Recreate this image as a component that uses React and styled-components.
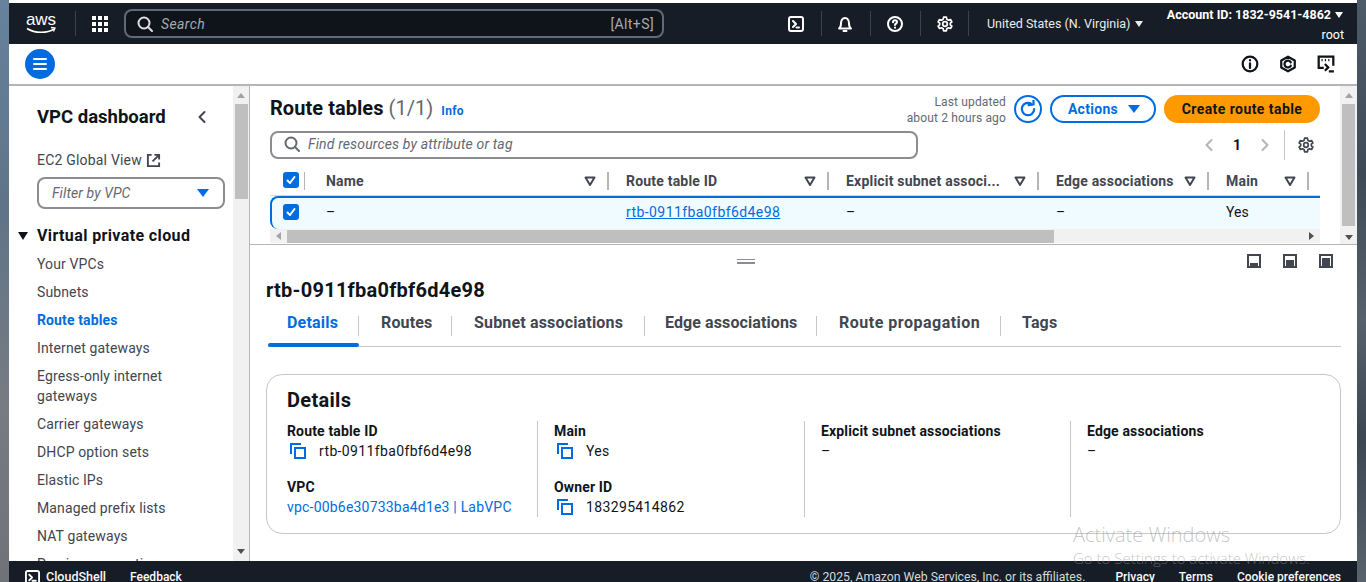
import React from 'react';
import styled, { createGlobalStyle } from 'styled-components';

const Global = createGlobalStyle`
  html, body { margin: 0; padding: 0; width: 1366px; height: 582px; overflow: hidden; background: #fff; }
  * { box-sizing: border-box; }
  body { font-family: Roboto, "Noto Sans", sans-serif; font-size: 14px; color: #0f141a; }
`;

const Desktop = styled.div`
  width: 1366px; height: 582px; display: flex; position: relative; overflow: hidden;
`;
const Gutter = styled.div`
  width: ${p => p.$w}px; flex: none;
  background: ${p => p.$right
    ? 'linear-gradient(180deg,#4d5a68 0%,#3f4a57 30%,#56616d 55%,#3c4652 75%,#59636e 100%)'
    : 'linear-gradient(180deg,#66829c 0%,#5f7488 35%,#777b82 70%,#6f7378 100%)'};
`;
const Window = styled.div`
  flex: 1; min-width: 0; display: flex; flex-direction: column; background: #fff; padding-top: 3px;
`;

/* ---- top nav ---- */
const TopNav = styled.header`
  height: 41px; flex: none; background: #161d26; color: #fff; display: flex; align-items: center; position: relative;
`;
const Logo = styled.div`
  width: 66px; padding-left: 16px; flex: none; display: flex; align-items: center;
`;
const NavSep = styled.span`
  width: 1px; height: 25px; background: #3a434f; flex: none; margin: ${p => p.$m || '0'};
`;
const SearchBox = styled.div`
  width: 540px; height: 29px; flex: none; background: #0f141a; border: 2px solid #5f6b7a; border-radius: 8px;
  display: flex; align-items: center; padding: 0 8px 0 11px; color: #a4abb3; font-size: 14px; letter-spacing: .4px;
`;
const SearchHint = styled.span`
  font-style: italic; margin-left: 8px; flex: 1;
`;
const NavIcons = styled.div`
  display: flex; align-items: center; margin-left: 118px; flex: none;
`;
const NavIcon = styled.span`
  width: ${p => p.$w}px; display: flex; justify-content: center; flex: none;
`;
const Region = styled.span`
  font-size: 12.5px; margin-left: 18px; white-space: nowrap; width: 159px; display: flex; align-items: center; flex: none; color: #e9ebed;
`;
const Caret = styled.span`
  width: 0; height: 0; border-left: 4px solid transparent; border-right: 4px solid transparent; border-top: 6px solid ${p => p.$c || '#e9ebed'};
  display: inline-block; margin-left: ${p => p.$m || 5}px; flex: none;
`;
const Account = styled.div`
  width: 185px; flex: none; margin-left: 13px; display: flex; flex-direction: column; align-items: flex-end; margin-top: 3px; font-size: 12.5px; line-height: 20px; white-space: nowrap;
`;
const AccountId = styled.span`
  font-weight: 700; display: flex; align-items: center; margin-right: 1px;
`;

/* ---- utility bar ---- */
const UtilBar = styled.div`
  height: 42px; flex: none; border-bottom: 2px solid #b4b4bb; display: flex; align-items: center; padding: 0 22px 0 16px;
  justify-content: space-between;
`;
const MenuBall = styled.span`
  width: 30px; height: 30px; border-radius: 50%; background: #006ce0; display: flex; align-items: center; justify-content: center;
`;
const UtilIcons = styled.div`
  display: flex; gap: 20px; align-items: center;
`;

/* ---- body ---- */
const Body = styled.div`
  flex: 1; min-height: 0; display: flex;
`;
const Side = styled.aside`
  width: 224px; flex: none; overflow: hidden; padding: 0 8px 0 28px; position: relative;
`;
const SideHead = styled.div`
  display: flex; align-items: center; justify-content: space-between; height: 30px; margin-top: 16px; padding-right: 16px;
`;
const SideTitle = styled.div`
  font-size: 18.5px; font-weight: 700; color: #0f141a;
`;
const GlobalLink = styled.div`
  display: flex; align-items: center; gap: 4px; margin-top: 18px; color: #424650; height: 20px; font-size: 14px; letter-spacing: .2px;
`;
const Filter = styled.div`
  width: 188px; height: 32px; border: 2px solid #8c8c94; border-radius: 8px; margin-top: 7px; display: flex; align-items: center; justify-content: space-between;
  padding: 0 14px 0 13px; font-style: italic; color: #656871; letter-spacing: .1px;
`;
const BlueTri = styled.span`
  width: 0; height: 0; border-left: 6px solid transparent; border-right: 6px solid transparent; border-top: 8px solid #006ce0;
`;
const SideSection = styled.div`
  font-size: 16px; font-weight: 700; margin-top: 17px; height: 20px; line-height: 20px; position: relative; white-space: nowrap; letter-spacing: .38px;
`;
const SectionTri = styled.span`
  position: absolute; left: -19px; top: 6px; width: 0; height: 0; border-left: 5.5px solid transparent; border-right: 5.5px solid transparent; border-top: 8px solid #0f141a;
`;
const NavList = styled.ul`
  list-style: none; margin: 8px 0 0; padding: 0;
`;
const NavItem = styled.li`
  line-height: 20px; margin-bottom: 8px; color: ${p => p.$on ? '#006ce0' : '#424650'}; font-weight: ${p => p.$on ? 700 : 400}; font-size: 14px; letter-spacing: .12px; padding-right: 4px;
`;
const VScroll = styled.div`
  width: 17px; flex: none; background: #f1f1f1; position: relative; display: flex; flex-direction: column; align-items: center;
  border-right: ${p => p.$line ? '1px solid #b4b4bb' : '0'};
`;
const ScrollThumb = styled.div`
  width: 13px; height: ${p => p.$h}px; background: #bfbfbf; margin-top: 6px; flex: none;
`;
const ArrowUp = styled.span`
  width: 0; height: 0; border-left: 4px solid transparent; border-right: 4px solid transparent; border-bottom: 5px solid #a3a3a3; margin-top: 7px; flex: none;
`;
const ArrowDown = styled.span`
  width: 0; height: 0; border-left: 4px solid transparent; border-right: 4px solid transparent; border-top: 5px solid #505050; margin-top: auto; margin-bottom: ${p => p.$b}px; flex: none;
`;
const MainCol = styled.main`
  flex: 1; min-width: 0; display: flex; flex-direction: column;
`;
const TopPane = styled.section`
  height: 159px; flex: none; display: flex; border-bottom: 1px solid #b4b4bb;
`;
const TopInner = styled.div`
  flex: 1; min-width: 0; padding: 0 20px; display: flex; flex-direction: column;
`;
const TitleRow = styled.div`
  height: 46px; flex: none; display: flex; align-items: center;
`;
const H1 = styled.h1`
  margin: -2px 0 0; font-size: 20px; font-weight: 700; color: #0f141a; line-height: 24px; white-space: nowrap; letter-spacing: .05px;
`;
const Count = styled.span`
  font-weight: 400; color: #656871;
`;
const Info = styled.span`
  font-size: 12px; font-weight: 700; color: #006ce0; margin-left: 8px; margin-top: 4px; letter-spacing: .3px;
`;
const Updated = styled.div`
  margin-left: auto; margin-top: 1px; font-size: 12px; line-height: 16px; color: #656871; text-align: right; white-space: nowrap; letter-spacing: .15px;
`;
const Refresh = styled.span`
  width: 28px; height: 28px; margin-left: 8px; border: 2px solid #006ce0; border-radius: 50%; display: flex; align-items: center; justify-content: center; flex: none;
`;
const Actions = styled.span`
  width: 106px; height: 28px; margin-left: 8px; border: 2px solid #006ce0; border-radius: 14px; color: #006ce0; font-weight: 700; display: flex; align-items: center; justify-content: center; gap: 10px; flex: none; letter-spacing: .3px; padding: 0 0 1px 2px;
`;
const Create = styled.span`
  width: 156px; height: 28px; margin-left: 8px; background: #ff9900; border-radius: 14px; color: #0f141a; font-weight: 700; display: flex; align-items: center; justify-content: center; flex: none; letter-spacing: .44px; padding-bottom: 1px;
`;
const FilterRow = styled.div`
  height: 28px; margin-top: -1px; flex: none; display: flex; align-items: center;
`;
const FindBox = styled.div`
  width: 648px; height: 28px; border: 2px solid #8c8c94; border-radius: 8px; display: flex; align-items: center; padding: 0 0 2px 12px; color: #656871; font-style: italic; gap: 8px; letter-spacing: .15px;
`;
const Pager = styled.div`
  margin-left: auto; display: flex; align-items: center; height: 28px;
`;
const PageNum = styled.span`
  font-weight: 700; width: 42px; text-align: center; color: #0f141a;
`;
const PagerSep = styled.span`
  width: 1px; height: 30px; background: #c6c6cd; margin: 0 13px 0 12px;
`;
const PagerEnd = styled.span`
  width: 6px; flex: none;
`;
const GridRow = styled.div`
  display: grid; grid-template-columns: 35px 304px 220px 210px 170px 100px 1fr; flex: none; height: ${p => p.$h}px;
`;
const HeadCell = styled.div`
  display: flex; align-items: center; justify-content: space-between; padding: 0 13px 2px ${p => p.$first ? 21 : 17}px; position: relative; font-weight: 700; color: #424650; white-space: nowrap; letter-spacing: .2px;
  &::after { content: ''; position: absolute; right: 0; top: 3px; bottom: 5px; width: 2px; background: #b4b4bb; }
`;
const CheckHead = styled.div`
  display: flex; align-items: center; padding: 0 0 4px 13px; position: relative;
  &::after { content: ''; position: absolute; right: 0; top: 3px; bottom: 5px; width: 1px; background: #b4b4bb; }
`;
const HeadWrap = styled.div`
  margin-top: 10px; border-bottom: 1px solid #d5d5da;
`;
const SelRow = styled.div`
  height: 33px; background: #f0fbff; border-top: 2px solid #006ce0; border-left: 2px solid #006ce0; border-radius: 8px 0 0 8px; flex: none; padding-bottom: 4px;
  display: grid; grid-template-columns: 33px 304px 220px 210px 170px 100px 1fr; align-items: center;
`;
const Cell = styled.div`
  padding-left: ${p => p.$first ? 21 : 17}px; white-space: nowrap; color: #0f141a;
`;
const CheckCell = styled.div`
  padding-left: 11px; display: flex; align-items: center;
`;
const Link = styled.a`
  color: #006ce0; text-decoration: underline; letter-spacing: .42px;
`;
const Box = styled.span`
  width: 16px; height: 16px; border-radius: 3px; background: #006ce0; display: flex; align-items: center; justify-content: center; flex: none;
`;
const HScroll = styled.div`
  height: 14px; background: #f1f1f1; flex: none; display: flex; align-items: center; position: relative;
`;
const HThumb = styled.div`
  margin-left: 17px; width: 767px; height: 13px; background: #bfbfbf;
`;
const HArrow = styled.span`
  position: absolute; top: 3px; width: 0; height: 0; border-top: 4px solid transparent; border-bottom: 4px solid transparent;
  ${p => p.$r ? 'right: 6px; border-left: 5px solid #505050;' : 'left: 6px; border-right: 5px solid #a3a3a3;'}
`;

/* ---- bottom pane ---- */
const BottomPane = styled.section`
  flex: 1; min-height: 0; padding: 0 16px; display: flex; flex-direction: column; position: relative;
`;
const PaneTools = styled.div`
  height: 32px; flex: none; display: flex; align-items: center; justify-content: flex-end; gap: 22px; padding-right: 8px; position: relative;
`;
const Grip = styled.span`
  position: absolute; left: 471px; top: 14px; width: 18px; height: 5px; border-top: 1px solid #8c8c94; border-bottom: 2px solid #8c8c94;
`;
const ResTitle = styled.h2`
  margin: 0; font-size: 20px; font-weight: 700; line-height: 26px; height: 26px; color: #0f141a; letter-spacing: .25px;
`;
const Tabs = styled.div`
  margin: 6px 0 0 2px; display: flex; height: 38px; border-bottom: 1px solid #c6c6cd; flex: none;
`;
const Tab = styled.div`
  padding: 0 0 11px ${p => p.$pad}px; width: ${p => p.$w}px; flex: none; height: 37px; display: flex; align-items: center; position: relative;
  font-size: 16px; font-weight: 700; white-space: nowrap; letter-spacing: ${p => p.$ls}px;
  color: ${p => p.$on ? '#006ce0' : '#424650'};
  &::before { content: ''; position: absolute; right: 0; top: 7px; height: 20px; width: 1px; background: ${p => p.$last ? 'transparent' : '#c6c6cd'}; }
  ${p => p.$on ? `&::after { content: ''; position: absolute; left: 0; right: 0; bottom: -1px; height: 4px; background: #006ce0; border-radius: 2px; }` : ''}
`;
const Card = styled.div`
  margin-top: 27px; height: 160px; border: 1px solid #c6c6cd; border-radius: 16px; padding: 13px 20px 0; flex: none;
`;
const CardTitle = styled.h3`
  margin: 0; font-size: 20px; font-weight: 700; line-height: 24px; color: #0f141a; letter-spacing: .3px;
`;
const CardGrid = styled.div`
  margin-top: 9px; display: grid; grid-template-columns: 250px 267px 266px 1fr;
`;
const CardCol = styled.div`
  height: 96px; padding-left: ${p => p.$first ? 0 : 16}px; border-left: ${p => p.$first ? 0 : '1px solid #c6c6cd'};
`;
const Field = styled.div`
  height: 56px;
`;
const Label = styled.div`
  font-weight: 700; line-height: 20px; color: #0f141a; letter-spacing: .15px;
`;
const Value = styled.div`
  display: flex; align-items: center; line-height: 20px; color: #0f141a; letter-spacing: .36px;
`;
const CopyWrap = styled.span`
  width: 32px; padding-left: 3px; display: flex; align-items: center; flex: none;
`;
const VpcLink = styled.a`
  color: #006ce0; line-height: 20px; letter-spacing: .2px;
`;

/* ---- footer ---- */
const Footer = styled.footer`
  height: 21px; flex: none; background: #161d26; color: #f9f9fa; display: flex; align-items: flex-start; padding: 8px 16px 0; font-size: 12px; overflow: hidden; line-height: 16px; white-space: nowrap;
`;
const FootLeft = styled.div`
  display: flex; align-items: center; font-weight: 500;
`;
const FootRight = styled.div`
  margin-left: auto; display: flex;
`;
const Copyright = styled.span`
  color: #d5d8dc; font-size: 12.25px;
`;
const FootLink = styled.span`
  font-weight: 500; margin-left: ${p => p.$m}px; font-size: ${p => p.$fs || 12}px;
`;
const Watermark = styled.div`
  position: absolute; left: 1073px; top: 523px; color: rgba(150,150,150,.55); pointer-events: none; font-family: "Open Sans", sans-serif; font-weight: 300; white-space: nowrap;
`;
const WmBig = styled.div`
  font-size: 20px; line-height: 24px;
`;
const WmSmall = styled.div`
  font-size: 15px; line-height: 20px; margin-top: 1px;
`;

const Svg = ({ s = 16, c = '#fff', w = 2, vb = '0 0 16 16', children, ...r }) => (
  <svg width={s} height={s} viewBox={vb} fill="none" stroke={c} strokeWidth={w} strokeLinecap="round" strokeLinejoin="round" {...r}>{children}</svg>
);
const SearchIco = ({ c }) => <Svg c={c}><circle cx="7" cy="7" r="5.5" /><path d="M11 11l4 4" /></Svg>;
const Check = () => <Svg s={12} w={2} vb="0 0 12 12"><path d="M2.5 6.5l2.5 2.5 4.5-6" /></Svg>;
const FilterTri = () => <Svg s={12} c="#424650" w={2} vb="0 0 12 12"><path d="M1.5 2.5h9L6 10z" /></Svg>;
const Gear = ({ c = '#fff', s = 16 }) => (
  <Svg c={c} s={s} w={1.7}>
    <circle cx="8" cy="8" r="2.3" />
    <path d="M6.600 1.200h2.800l.4 2 1.700 1 2-.7 1.400 2.400-1.600 1.300v1.600l1.600 1.300-1.400 2.400-2-.7-1.700 1-.4 2H6.600l-.4-2-1.700-1-2 .7L1.100 10.100l1.600-1.300V7.200L1.100 5.900l1.400-2.400 2 .7 1.700-1z" />
  </Svg>
);
const Copy = () => (
  <Svg s={16} c="#006ce0" w={2} vb="0 0 16 16" strokeLinecap="butt" strokeLinejoin="miter">
    <rect x="5" y="5" width="10" height="10" />
    <path d="M11 1H1v10" />
  </Svg>
);
const Pane = ({ h }) => (
  <svg width="14" height="14" viewBox="0 0 14 14">
    <rect x="1" y="1" width="12" height="12" fill="none" stroke="#424650" strokeWidth="2" />
    <rect x="3" y={13 - h - 1} width="8" height={h} fill="#424650" />
  </svg>
);

const sideItems = ['Your VPCs', 'Subnets', 'Route tables', 'Internet gateways', 'Egress-only internet gateways', 'Carrier gateways', 'DHCP option sets', 'Elastic IPs', 'Managed prefix lists', 'NAT gateways', 'Peering connections'];
const heads = ['Name', 'Route table ID', 'Explicit subnet associ...', 'Edge associations', 'Main'];
const tabs = [['Details', 91, 19, .2], ['Routes', 93, 22, .15], ['Subnet associations', 193, 22, .17], ['Edge associations', 172, 20, .1], ['Route propagation', 184, 22, .5], ['Tags', 80, 21, .15]];

export default function App() {
  return (
    <Desktop>
      <Global />
      <Gutter $w={9} />
      <Window>
        <TopNav>
          <Logo>
            <svg width="32" height="26" viewBox="0 0 32 26">
              <text x="16" y="14" textAnchor="middle" fill="#fff" fontSize="17" fontFamily="Liberation Sans, sans-serif">aws</text>
              <path d="M2 17.500c8 5 20 5 27 .5" fill="none" stroke="#fff" strokeWidth="1.600" />
              <path d="M26 16.500l4 .5-1.500 3.500" fill="none" stroke="#fff" strokeWidth="1.300" />
            </svg>
          </Logo>
          <NavSep />
          <NavIcon $w={48}>
            <svg width="16" height="16" viewBox="0 0 16 16" fill="#fff">
              {[0, 6, 12].flatMap(y => [0, 6, 12].map(x => <rect key={x + '-' + y} x={x} y={y} width="4" height="4" />))}
            </svg>
          </NavIcon>
          <SearchBox>
            <SearchIco c="#dedee3" />
            <SearchHint>Search</SearchHint>
            <span>[Alt+S]</span>
          </SearchBox>
          <NavIcons>
            <NavIcon $w={28}>
              <Svg><rect x="1" y="1" width="14" height="14" rx="2" /><path d="M5 5l3 3-3 3M8.500 11.500H11" /></Svg>
            </NavIcon>
            <NavSep $m="0 11px" />
            <NavIcon $w={24}>
              <Svg><path d="M2 12.500h12c-1.500-1-2-2.500-2-5 0-3-1.500-5.500-4-5.500S4 4.500 4 7.500c0 2.500-.5 4-2 5zM6.500 15h3" /></Svg>
            </NavIcon>
            <NavSep $m="0 12px 0 13px" />
            <NavIcon $w={24}>
              <Svg><circle cx="8" cy="8" r="7" /><path d="M6 6.200c0-1.200 1-1.900 2-1.900s2 .7 2 1.800c0 1.500-2 1.500-2 3" /><path d="M8 11.500v.3" /></Svg>
            </NavIcon>
            <NavSep $m="0 12px 0 13px" />
            <NavIcon $w={24}><Gear /></NavIcon>
            <NavSep $m="0 0 0 11px" />
          </NavIcons>
          <Region>United States (N. Virginia)<Caret $m={5} /></Region>
          <Account>
            <AccountId>Account ID: 1832-9541-4862<Caret $c="#fff" $m={4} /></AccountId>
            <span>root</span>
          </Account>
        </TopNav>
        <UtilBar>
          <MenuBall>
            <Svg s={16}><path d="M2 3h12M2 8h12M2 13h12" /></Svg>
          </MenuBall>
          <UtilIcons>
            <Svg s={18} c="#0f141a" vb="0 0 16 16"><circle cx="8" cy="8" r="6.500" /><path d="M8 7.500v4M8 4.500v.3" /></Svg>
            <Svg s={18} c="#0f141a" vb="0 0 16 16"><path d="M8 1.500l6 3.300v6.400l-6 3.300-6-3.300V4.800z" /><path d="M10.500 6.500A3 3 0 1 0 10.500 9.500" /></Svg>
            <Svg s={18} c="#0f141a" vb="0 0 16 16" strokeLinecap="butt" strokeLinejoin="miter"><path d="M6 11.500H1.500V1.500h13v8" /><path d="M4 4.500h1M7 4.500h1M10 4.500h1" /><path d="M7 8l3 3-3 3M10.500 14.500H15" /></Svg>
          </UtilIcons>
        </UtilBar>
        <Body>
          <Side>
            <SideHead>
              <SideTitle>VPC dashboard</SideTitle>
              <Svg s={14} c="#424650" vb="0 0 14 14"><path d="M9.500 2l-5 5 5 5" /></Svg>
            </SideHead>
            <GlobalLink>EC2 Global View
              <Svg s={15} c="#424650" vb="0 0 16 16" strokeLinecap="butt" strokeLinejoin="miter"><path d="M6 2H2v12h12v-4" /><path d="M9 2h5v5M14 2L7 9" /></Svg>
            </GlobalLink>
            <Filter>Filter by VPC<BlueTri /></Filter>
            <SideSection><SectionTri />Virtual private cloud</SideSection>
            <NavList>
              {sideItems.map(t => <NavItem key={t} $on={t === 'Route tables'}>{t}</NavItem>)}
            </NavList>
          </Side>
          <VScroll $line>
            <ArrowUp />
            <ScrollThumb $h={95} />
            <ArrowDown $b={7} />
          </VScroll>
          <MainCol>
            <TopPane>
              <TopInner>
                <TitleRow>
                  <H1>Route tables <Count>(1/1)</Count></H1>
                  <Info>Info</Info>
                  <Updated>Last updated<br />about 2 hours ago</Updated>
                  <Refresh>
                    <Svg s={18} c="#006ce0" vb="0 0 16 16"><path d="M13.500 8A5.500 5.500 0 1 1 11 3.400" /><path d="M8.500 4.500L13 4l-.2-4" /></Svg>
                  </Refresh>
                  <Actions>Actions<BlueTri /></Actions>
                  <Create>Create route table</Create>
                </TitleRow>
                <FilterRow>
                  <FindBox><SearchIco c="#656871" />Find resources by attribute or tag</FindBox>
                  <Pager>
                    <Svg s={14} c="#b4b4bb" vb="0 0 14 14"><path d="M9.500 2l-5 5 5 5" /></Svg>
                    <PageNum>1</PageNum>
                    <Svg s={14} c="#b4b4bb" vb="0 0 14 14"><path d="M4.500 2l5 5-5 5" /></Svg>
                    <PagerSep />
                    <Gear c="#424650" />
                    <PagerEnd />
                  </Pager>
                </FilterRow>
                <HeadWrap>
                  <GridRow $h={26}>
                    <CheckHead><Box><Check /></Box></CheckHead>
                    {heads.map((h, i) => <HeadCell key={h} $first={i === 0}>{h}<FilterTri /></HeadCell>)}
                  </GridRow>
                </HeadWrap>
                <SelRow>
                  <CheckCell><Box><Check /></Box></CheckCell>
                  <Cell $first>–</Cell>
                  <Cell><Link>rtb-0911fba0fbf6d4e98</Link></Cell>
                  <Cell>–</Cell>
                  <Cell>–</Cell>
                  <Cell>Yes</Cell>
                  <span />
                </SelRow>
                <HScroll>
                  <HArrow />
                  <HThumb />
                  <HArrow $r />
                </HScroll>
              </TopInner>
              <VScroll>
                <ArrowUp />
                <ScrollThumb $h={122} />
                <ArrowDown $b={4} />
              </VScroll>
            </TopPane>
            <BottomPane>
              <PaneTools>
                <Grip />
                <Pane h={3} />
                <Pane h={6} />
                <Pane h={8} />
              </PaneTools>
              <ResTitle>rtb-0911fba0fbf6d4e98</ResTitle>
              <Tabs>
                {tabs.map(([t, w, pad, ls], i) => <Tab key={t} $w={w} $pad={pad} $ls={ls} $on={i === 0} $last={i === 5}>{t}</Tab>)}
              </Tabs>
              <Card>
                <CardTitle>Details</CardTitle>
                <CardGrid>
                  <CardCol $first>
                    <Field>
                      <Label>Route table ID</Label>
                      <Value><CopyWrap><Copy /></CopyWrap>rtb-0911fba0fbf6d4e98</Value>
                    </Field>
                    <Field>
                      <Label>VPC</Label>
                      <VpcLink>vpc-00b6e30733ba4d1e3 | LabVPC</VpcLink>
                    </Field>
                  </CardCol>
                  <CardCol>
                    <Field>
                      <Label>Main</Label>
                      <Value><CopyWrap><Copy /></CopyWrap>Yes</Value>
                    </Field>
                    <Field>
                      <Label>Owner ID</Label>
                      <Value><CopyWrap><Copy /></CopyWrap>183295414862</Value>
                    </Field>
                  </CardCol>
                  <CardCol>
                    <Label>Explicit subnet associations</Label>
                    <Value>–</Value>
                  </CardCol>
                  <CardCol>
                    <Label>Edge associations</Label>
                    <Value>–</Value>
                  </CardCol>
                </CardGrid>
              </Card>
            </BottomPane>
          </MainCol>
        </Body>
        <Footer>
          <FootLeft>
            <Svg s={15} vb="0 0 16 16"><rect x="1" y="1" width="14" height="14" rx="2" /><path d="M4.500 5l3 3-3 3M8 11.500h3.500" /></Svg>
            <FootLink $m={6} $fs={12.5}>CloudShell</FootLink>
            <FootLink $m={24}>Feedback</FootLink>
          </FootLeft>
          <FootRight>
            <Copyright>© 2025, Amazon Web Services, Inc. or its affiliates.</Copyright>
            <FootLink $m={30}>Privacy</FootLink>
            <FootLink $m={24}>Terms</FootLink>
            <FootLink $m={24}>Cookie preferences</FootLink>
          </FootRight>
        </Footer>
      </Window>
      <Gutter $w={9} $right />
      <Watermark>
        <WmBig>Activate Windows</WmBig>
        <WmSmall>Go to Settings to activate Windows.</WmSmall>
      </Watermark>
    </Desktop>
  );
}
